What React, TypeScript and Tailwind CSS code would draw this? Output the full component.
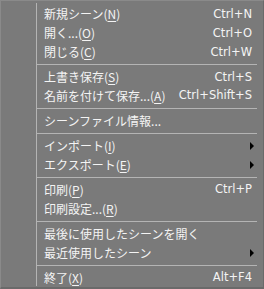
import React from "react";

type Item =
  | { type: "sep" }
  | { type: "item"; pre: string; key?: string; post?: string; shortcut?: string; sub?: boolean };

const items: Item[] = [
  { type: "item", pre: "新規シーン(", key: "N", post: ")", shortcut: "Ctrl+N" },
  { type: "item", pre: "開く...(", key: "O", post: ")", shortcut: "Ctrl+O" },
  { type: "item", pre: "閉じる(", key: "C", post: ")", shortcut: "Ctrl+W" },
  { type: "sep" },
  { type: "item", pre: "上書き保存(", key: "S", post: ")", shortcut: "Ctrl+S" },
  { type: "item", pre: "名前を付けて保存...(", key: "A", post: ")", shortcut: "Ctrl+Shift+S" },
  { type: "sep" },
  { type: "item", pre: "シーンファイル情報..." },
  { type: "sep" },
  { type: "item", pre: "インポート(", key: "I", post: ")", sub: true },
  { type: "item", pre: "エクスポート(", key: "E", post: ")", sub: true },
  { type: "sep" },
  { type: "item", pre: "印刷(", key: "P", post: ")", shortcut: "Ctrl+P" },
  { type: "item", pre: "印刷設定...(", key: "R", post: ")" },
  { type: "sep" },
  { type: "item", pre: "最後に使用したシーンを開く" },
  { type: "item", pre: "最近使用したシーン", sub: true },
  { type: "sep" },
  { type: "item", pre: "終了(", key: "X", post: ")", shortcut: "Alt+F4" },
];

export default function App() {
  return (
    <div
      className="w-[264px] h-[289px] bg-[#7a7a7a] border-t border-l border-[#8a8a8a] border-r border-r-[#6a6a6a] border-b-2 border-b-[#6a6a6a] flex text-[#f4f4f4] text-[12px]"
      style={{ fontFamily: '"Noto Sans CJK JP", sans-serif' }}
    >
      <div className="w-[36px] shrink-0 border-r border-[#b4b4b4] mt-[2px] mb-[1px]" />
      <div className="flex-1 flex flex-col pt-[4px] pr-[6px]">
        {items.map((it, i) =>
          it.type === "sep" ? (
            <div key={i} className="h-[6px] flex items-center">
              <div className="h-px w-full bg-[#b4b4b4]" />
            </div>
          ) : (
            <div key={i} className="h-[19px] flex items-center pl-[7px] leading-none">
              <span className="flex-1 whitespace-nowrap">
                {it.pre}
                {it.key && <span className="underline underline-offset-2">{it.key}</span>}
                {it.post}
              </span>
              {it.shortcut && (
                <span className="whitespace-nowrap pr-[5px]" style={{ fontFamily: '"DejaVu Sans", sans-serif', fontSize: "11.5px" }}>
                  {it.shortcut}
                </span>
              )}
              {it.sub && (
                <svg width="5" height="8" viewBox="0 0 5 8" className="mr-[2px]">
                  <path d="M0 0 L4 4 L0 8 Z" fill="#000" />
                </svg>
              )}
            </div>
          )
        )}
      </div>
    </div>
  );
}
